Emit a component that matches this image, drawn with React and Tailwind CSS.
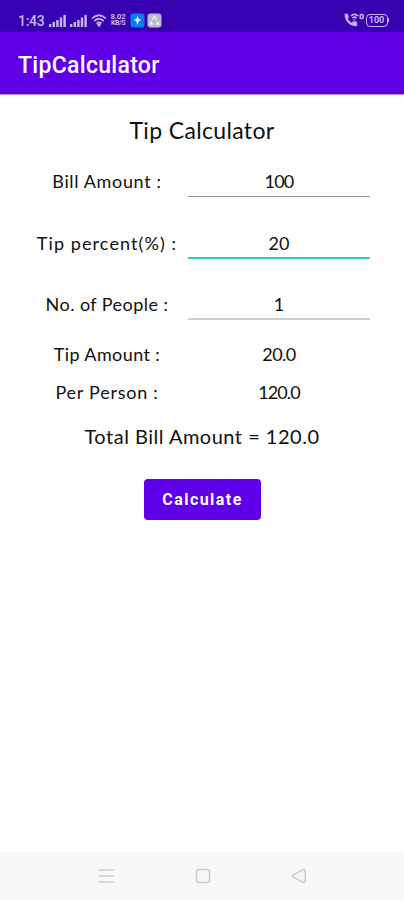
import React from "react";

function Signal() {
  return (
    <svg width="17" height="13" viewBox="0 0 17 13" fill="#c9b5f5">
      <rect x="0" y="10" width="2.4" height="3" />
      <rect x="3.6" y="8" width="2.4" height="5" />
      <rect x="7.2" y="6" width="2.4" height="7" />
      <rect x="10.8" y="3.5" width="2.4" height="9.5" />
      <rect x="14.4" y="1" width="2.4" height="12" />
    </svg>
  );
}

function StatusBar() {
  return (
    <header className="flex h-8 items-end justify-between bg-[#3700b0] pr-[15px] pb-[4px] pl-[18px] text-[#c9b5f5]">
      <div className="flex h-4 items-center">
        <span className="w-[27px] pt-[2px] text-[14px] leading-4 font-medium tracking-[-0.3px]">1:43</span>
        <span className="ml-1"><Signal /></span>
        <span className="ml-1"><Signal /></span>
        <svg className="ml-1" width="16" height="13" viewBox="0 0 16 13" fill="none" stroke="#c9b5f5" strokeWidth="1.7">
          <path d="M1 4.5Q8-2 15 4.5M3.3 7Q8 2.8 12.7 7M5.6 9.4Q8 7.3 10.4 9.4" />
          <path d="M7 10.4h2L8 12z" fill="#c9b5f5" />
        </svg>
        <span className="ml-[3px] flex w-4 flex-col items-center text-[8px] leading-[6.5px] font-bold tracking-[-0.3px]">
          <span>8.02</span>
          <span className="text-[7px] tracking-[-0.4px]">KB/S</span>
        </span>
        <svg className="ml-1" width="15" height="15" viewBox="0 0 15 15">
          <rect x="0.5" y="0.5" width="14" height="14" rx="3" fill="#087cf5" />
          <path d="M7.5 3L8.7 5.8l2.6 1.1-2.4 1.4-1.4 3.8-1.4-3.8-2.4-1.4 2.6-1.1z" fill="#d8f0ff" />
        </svg>
        <svg className="ml-[2px]" width="15" height="15" viewBox="0 0 15 15">
          <rect x="0.5" y="0.5" width="14" height="14" rx="3" fill="#b9bac9" />
          <path d="M5.5 7l2-3.5 2 3.5M4.7 8.5L3.3 11h3M10.3 8.5l1.4 2.5h-3" fill="none" stroke="#f3f3f8" strokeWidth="1.4" />
        </svg>
      </div>
      <div className="flex h-4 items-center">
        <svg className="mr-[1px]" width="21" height="14" viewBox="0 0 21 14" fill="none" stroke="#c9b5f5">
          <path d="M1.8 1.5C1.8 7.5 6 12 12.6 12.2" strokeWidth="2.2" />
          <path d="M1 1h2.5l1 3.4-2 1.4zM8.3 9.4l1.5-1.5 3 1.3v3.4z" fill="#c9b5f5" strokeWidth="0.6" />
          <path d="M7 3Q10.5-.2 14 3M8.3 5Q10.5 3.2 12.7 5" strokeWidth="1.6" />
          <path d="M9.7 6h1.6l-.8 1z" fill="#c9b5f5" strokeWidth="0.4" />
          <rect x="16.2" y="1.4" width="3" height="4" rx="1" strokeWidth="1.5" />
        </svg>
        <span className="flex h-[13px] w-[22px] items-center justify-center rounded-[4px] border border-[#c9b5f5] text-[9px] leading-none font-bold">100</span>
        <span className="h-1 w-[1.5px] bg-[#c9b5f5]" />
      </div>
    </header>
  );
}

function Field({ label, labelClass, value, valueClass, line }) {
  return (
    <div className="flex h-[61.5px] items-start">
      <div className={`w-[214px] text-center text-[18px] leading-[22px] whitespace-nowrap ${labelClass}`}>{label}</div>
      <div className={`-ml-[26px] flex h-[27px] w-[182px] justify-center text-[18px] leading-[22px] ${line} ${valueClass}`}>{value}</div>
    </div>
  );
}

function Result({ label, labelClass, value, valueClass }) {
  return (
    <div className="flex h-[38px] items-start text-[18px] leading-[22px]">
      <div className={`w-[214px] text-center ${labelClass}`}>{label}</div>
      <div className={`-ml-[26px] w-[182px] text-center ${valueClass}`}>{value}</div>
    </div>
  );
}

export default function App() {
  return (
    <div className="flex h-[900px] w-[404px] flex-col overflow-hidden bg-[#fefefe] font-['Roboto',sans-serif]">
      <StatusBar />
      <div className="flex h-[63px] items-center border-b border-[#b78af5] bg-[#6000e8] pt-[6px] pl-[18px] text-[23px] leading-7 font-medium tracking-[0.3px] text-white">TipCalculator</div>
      <main className="flex flex-1 flex-col font-['Lato',sans-serif] text-[#111]">
        <h1 className="mt-[21px] text-center text-[23px] leading-7 tracking-[0.35px]">Tip Calculator</h1>
        <div className="mt-[26px]">
          <Field label="Bill Amount :" labelClass="tracking-[0.65px]" value="100" valueClass="tracking-[-0.8px]" line="border-b border-[#929292]" />
          <Field label="Tip percent(%) :" labelClass="tracking-[1.1px]" value="20" valueClass="tracking-[0px]" line="border-b-2 border-[#3bc9b7]" />
          <Field label="No. of People :" labelClass="tracking-[0.45px]" value="1" valueClass="" line="border-b-2 border-[#cecece]" />
        </div>
        <div className="-mt-[12px]">
          <Result label="Tip Amount :" labelClass="tracking-[0.4px]" value="20.0" valueClass="tracking-[-0.5px]" />
          <Result label="Per Person :" labelClass="tracking-[0.75px]" value="120.0" valueClass="tracking-[-0.9px]" />
        </div>
        <p className="mt-[4px] text-center text-[20px] leading-[26px] tracking-[0.5px]">Total Bill Amount = 120.0</p>
        <button className="mt-[30px] ml-[144px] flex h-[41px] w-[117px] items-center justify-center rounded-[4px] bg-[#6000e8] pt-[2px] font-['Roboto',sans-serif] text-[16px] font-bold tracking-[1.45px] text-white">Calculate</button>
      </main>
      <nav className="flex h-12 items-center justify-between bg-[#f7f7f7] pr-[97px] pl-[98px]">
        <svg width="16" height="16" viewBox="0 0 16 16" stroke="#d8d8d8" strokeWidth="1.8"><path d="M.5 2h15M.5 8h15M.5 14h15" /></svg>
        <svg width="16" height="16" viewBox="0 0 16 16" fill="none" stroke="#cbcbcb" strokeWidth="1.5"><rect x="1.5" y="1.5" width="13" height="13" rx="2" /></svg>
        <svg width="16" height="16" viewBox="0 0 16 16" fill="none" stroke="#cbcbcb" strokeWidth="1.5" strokeLinejoin="round"><path d="M2 7.2L12.5 1.4Q14.2 1 14.2 2.8V13.2Q14.2 15 12.5 14.5L2 8.8Q1 8 2 7.2z" /></svg>
      </nav>
    </div>
  );
}
